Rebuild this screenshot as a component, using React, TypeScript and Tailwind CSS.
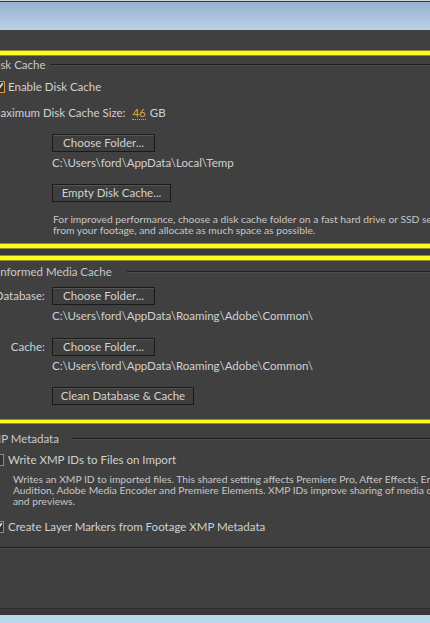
import React from 'react';

function Yellow({ h }: { h: string }) {
  return <div className={`${h} shrink-0 bg-[#fbfb1e] border-y border-[#8f8f2a]`} />;
}

function Header({ text, textClass }: { text: string; textClass: string }) {
  return (
    <div className="flex items-center h-[18px]">
      <span className={`${textClass} shrink-0 whitespace-nowrap text-[11.5px] text-[#c9c9c9]`}>{text}</span>
      <div className="flex-1 h-[2px] border-t border-[#1f1f1f] bg-[#4c4c4c]" />
    </div>
  );
}

function Check({ checked, focus }: { checked?: boolean; focus?: boolean }) {
  return (
    <div
      className={`w-[12px] h-[12px] shrink-0 border flex items-center justify-center bg-[#333333] ${
        focus ? 'border-[#d99b2e]' : 'border-[#8a8a8a]'
      }`}
    >
      {checked && (
        <svg width="10" height="10" viewBox="0 0 10 10">
          <path d="M1.5 5.2 L4 8 L8.8 1.2" fill="none" stroke="#e2e2e2" strokeWidth="1.6" />
        </svg>
      )}
    </div>
  );
}

function Btn({ label, w }: { label: string; w: string }) {
  return (
    <button
      className={`${w} h-[18px] shrink-0 border border-[#1a1a1a] bg-[#3e3e3e] shadow-[inset_0_1px_0_#555555] text-[11.5px] leading-none text-[#d2d2d2] flex items-center justify-center`}
    >
      {label}
    </button>
  );
}

function Label({ text }: { text: string }) {
  return (
    <div className="w-[45px] shrink-0 flex justify-end">
      <span className="shrink-0 text-[11.5px] whitespace-nowrap">{text}</span>
    </div>
  );
}

export default function App() {
  return (
    <div className="w-[430px] h-[623px] overflow-hidden bg-[#404040] flex flex-col font-['Lato','Liberation_Sans',sans-serif] text-[#d0d0d0]">
      {/* window chrome */}
      <div className="h-px shrink-0 bg-[#d6d6d6]" />
      <div className="h-px shrink-0 bg-[#3a3a3a]" />
      <div className="h-[28px] shrink-0 bg-gradient-to-b from-[#95b2cf] to-[#bbd2e7]" />
      <div className="h-[20px] shrink-0" />
      <Yellow h="h-[6px]" />

      {/* Disk Cache */}
      <div className="h-[187px] shrink-0 flex flex-col">
        <Header text="Disk Cache" textClass="ml-[-11px] w-[61px]" />
        <div className="mt-[4px] h-[18px] flex items-center ml-[-7px] gap-[3px]">
          <Check checked focus />
          <span className="text-[11.5px] whitespace-nowrap">Enable Disk Cache</span>
        </div>
        <div className="mt-[8px] h-[18px] flex items-center ml-[-10px] text-[11.5px] whitespace-nowrap">
          <span>Maximum Disk Cache Size:</span>
          <span className="ml-[7px] text-[#e3a43a] border-b border-dotted border-[#e3a43a] leading-[12px]">46</span>
          <span className="ml-[4px]">GB</span>
        </div>
        <div className="mt-[12px] ml-[52px]">
          <Btn label="Choose Folder..." w="w-[103px]" />
        </div>
        <div className="mt-[4px] h-[14px] ml-[52px] flex items-center text-[11.5px] whitespace-nowrap">
          C:\Users\ford\AppData\Local\Temp
        </div>
        <div className="mt-[14px] ml-[52px]">
          <Btn label="Empty Disk Cache..." w="w-[119px]" />
        </div>
        <div className="mt-[12px] ml-[53px] text-[10.3px] leading-[11px] text-[#c6c6c6] whitespace-nowrap">
          <div>For improved performance, choose a disk cache folder on a fast hard drive or SSD separate</div>
          <div>from your footage, and allocate as much space as possible.</div>
        </div>
      </div>

      <Yellow h="h-[6px]" />
      <div className="h-[6px] shrink-0 bg-[#383838]" />
      <Yellow h="h-[6px]" />

      {/* Informed Media Cache */}
      <div className="h-[158px] shrink-0 flex flex-col">
        <div className="mt-[2px]">
          <Header text="Informed Media Cache" textClass="ml-[-3px] w-[130px]" />
        </div>
        <div className="mt-[6px] flex items-center h-[18px]">
          <Label text="Database:" />
          <div className="ml-[7px]">
            <Btn label="Choose Folder..." w="w-[103px]" />
          </div>
        </div>
        <div className="mt-[4px] h-[14px] ml-[52px] flex items-center text-[11.5px] whitespace-nowrap">
          C:\Users\ford\AppData\Roaming\Adobe\Common\
        </div>
        <div className="mt-[15px] flex items-center h-[18px]">
          <Label text="Cache:" />
          <div className="ml-[7px]">
            <Btn label="Choose Folder..." w="w-[103px]" />
          </div>
        </div>
        <div className="mt-[3px] h-[14px] ml-[52px] flex items-center text-[11.5px] whitespace-nowrap">
          C:\Users\ford\AppData\Roaming\Adobe\Common\
        </div>
        <div className="mt-[14px] ml-[52px]">
          <Btn label="Clean Database & Cache" w="w-[142px]" />
        </div>
      </div>

      <Yellow h="h-[5px]" />

      {/* XMP Metadata */}
      <div className="h-[123px] shrink-0 flex flex-col">
        <div className="mt-[6px]">
          <Header text="XMP Metadata" textClass="ml-[-17px] w-[89px]" />
        </div>
        <div className="mt-[3px] h-[18px] flex items-center ml-[-8px] gap-[4px]">
          <Check />
          <span className="text-[11.5px] whitespace-nowrap">Write XMP IDs to Files on Import</span>
        </div>
        <div className="mt-[5px] ml-[13px] text-[10.3px] leading-[11px] text-[#c6c6c6] whitespace-nowrap">
          <div>Writes an XMP ID to imported files. This shared setting affects Premiere Pro, After Effects, Encore,</div>
          <div>Audition, Adobe Media Encoder and Premiere Elements. XMP IDs improve sharing of media cache files</div>
          <div>and previews.</div>
        </div>
        <div className="mt-[11px] h-[18px] flex items-center ml-[-8px] gap-[4px]">
          <Check checked />
          <span className="text-[11.5px] whitespace-nowrap">Create Layer Markers from Footage XMP Metadata</span>
        </div>
      </div>

      <div className="h-[2px] shrink-0 border-t border-[#1e1e1e] bg-[#4a4a4a]" />
      <div className="flex-1" />
      <div className="h-[7px] shrink-0 border-t border-[#2e2e2e] bg-[#39393b]" />
      <div className="h-[8px] shrink-0 bg-[#b9d7ec]" />
    </div>
  );
}
